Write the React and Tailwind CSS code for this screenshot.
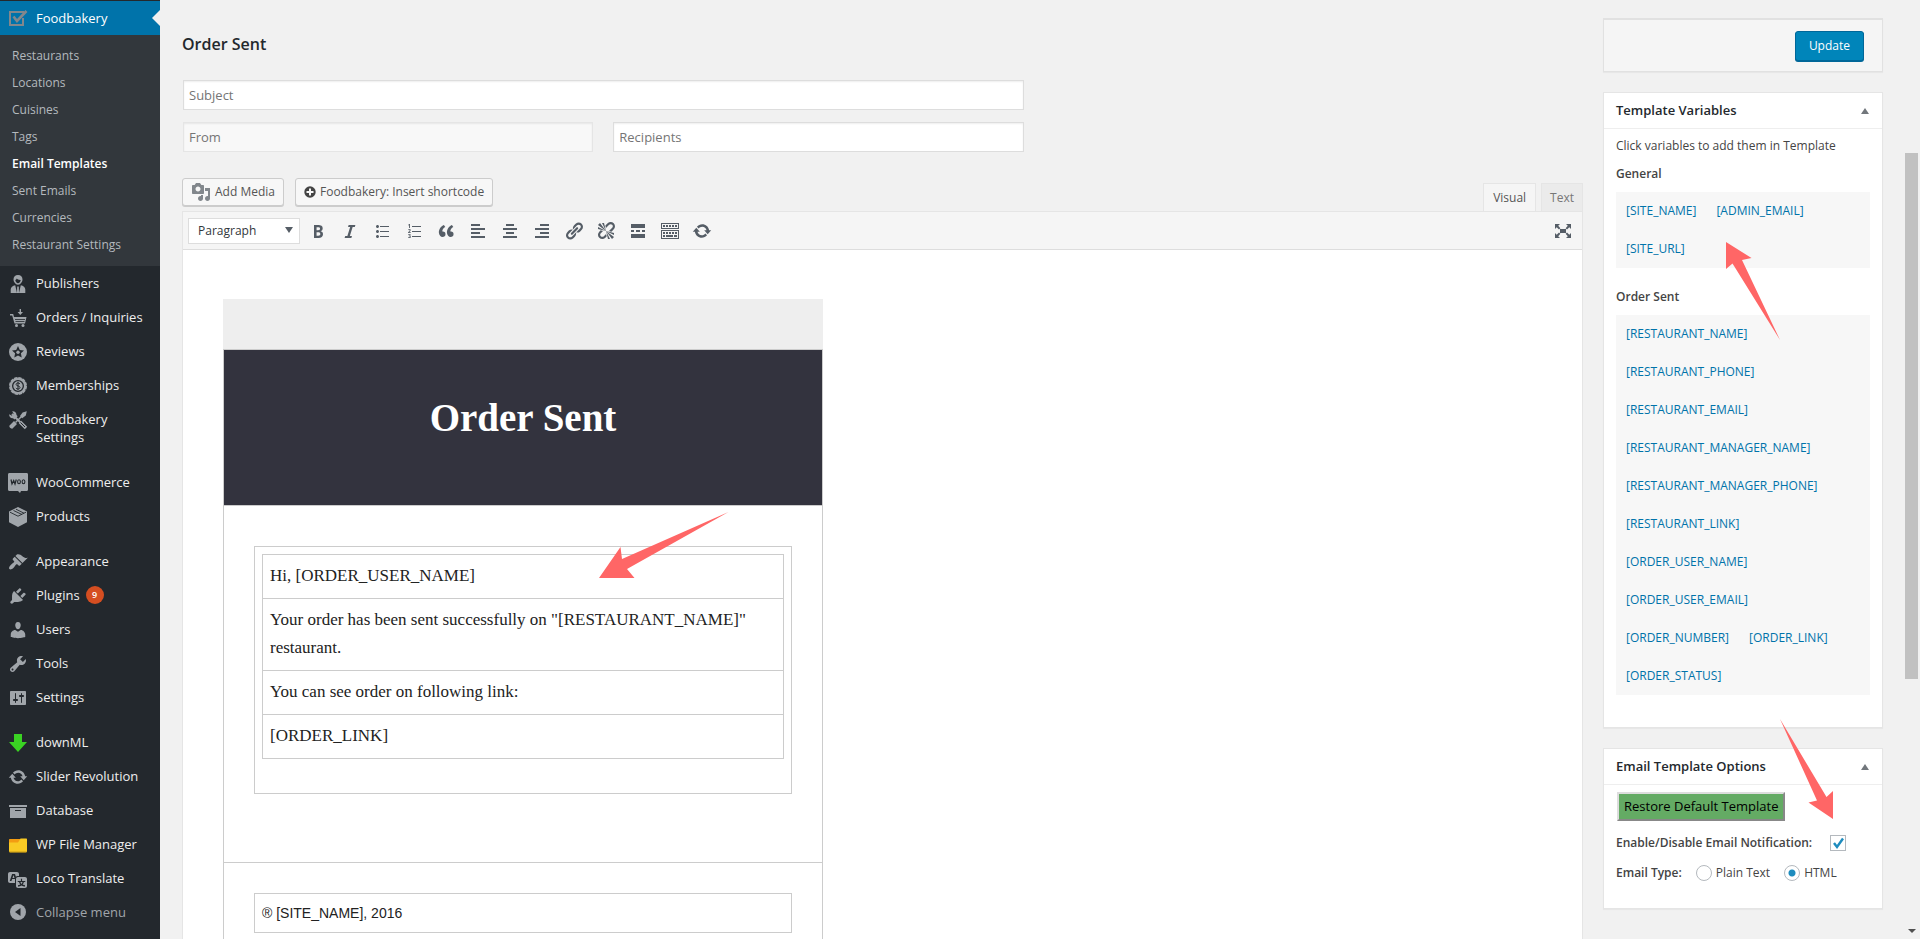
import React from "react";

const PATHS = {
  appearance:
    "M14.48 11.06L7.41 3.99l1.5-1.5c.5-.56 2.3-.47 3.51.32 1.21.8 1.43 1.28 2.91 2.1 1.18.64 2.45 1.26 4.45.85zm-.71.71L6.7 4.7 4.93 6.47c-.39.39-.39 1.02 0 1.41l1.06 1.06c.39.39.39 1.03 0 1.42-.6.6-1.43 1.11-2.21 1.69-.35.26-.7.53-1.01.84C1.43 14.23.4 16.08 1.4 17.07c.99 1 2.84-.03 4.18-1.36.31-.31.58-.66.85-1.02.57-.78 1.08-1.61 1.69-2.21.39-.39 1.02-.39 1.41 0l1.06 1.06c.39.39 1.02.39 1.41 0z",
  plugins:
    "M13.11 4.36L9.87 7.6 8 5.73l3.24-3.24c.35-.34 1.05-.2 1.56.32.52.51.66 1.21.31 1.55zm-8 1.77l.91-1.12 9.01 9.01-1.19.84c-.71.71-2.63 1.16-3.82 1.16H6.14L4.9 17.26c-.59.59-1.54.59-2.12 0-.59-.58-.59-1.53 0-2.12l1.24-1.24v-3.88c0-1.13.4-3.19 1.09-3.89zm7.26 3.97l3.24-3.24c.34-.35 1.04-.21 1.55.31.52.51.66 1.21.31 1.55l-3.24 3.25z",
  users:
    "M10 9.25c-2.27 0-2.73-3.44-2.73-3.44C7 4.02 7.82 2 9.97 2c2.16 0 2.98 2.02 2.71 3.81 0 0-.41 3.44-2.68 3.44zm0 2.57L12.72 10c2.39 0 4.52 2.33 4.52 4.53v2.49s-3.65 1.13-7.24 1.13c-3.65 0-7.24-1.13-7.24-1.13v-2.49c0-2.25 1.94-4.48 4.47-4.48z",
  tools:
    "M16.68 9.77c-1.34 1.34-3.3 1.67-4.95.99l-5.41 6.52c-.99.99-2.59.99-3.58 0s-.99-2.59 0-3.57l6.52-5.42c-.68-1.65-.35-3.61.99-4.95 1.28-1.28 3.12-1.62 4.72-1.06l-2.89 2.89 2.82 2.82 2.86-2.87c.53 1.58.18 3.39-1.08 4.65zM3.81 16.21c.4.39 1.04.39 1.43 0 .4-.4.4-1.04 0-1.43-.39-.4-1.03-.4-1.43 0-.39.39-.39 1.03 0 1.43z",
  settings:
    "M18 16V4c0-.55-.45-1-1-1H3c-.55 0-1 .45-1 1v12c0 .55.45 1 1 1h14c.55 0 1-.45 1-1zM8 11h1c.55 0 1 .45 1 1s-.45 1-1 1H8v1.5c0 .28-.22.5-.5.5s-.5-.22-.5-.5V13H6c-.55 0-1-.45-1-1s.45-1 1-1h1V5.5c0-.28.22-.5.5-.5s.5.22.5.5V11zm5-2h-1c-.55 0-1-.45-1-1s.45-1 1-1h1V5.5c0-.28.22-.5.5-.5s.5.22.5.5V7h1c.55 0 1 .45 1 1s-.45 1-1 1h-1v5.5c0 .28-.22.5-.5.5s-.5-.22-.5-.5V9z",
  archive: "M19 4v2H1V4h18zM2 7h16v10H2V7zm11 3V9H7v1h6z",
  update:
    "M10.2 3.28c3.53 0 6.43 2.61 6.92 6h2.08l-3.5 4-3.5-4h2.32c-.45-1.97-2.21-3.45-4.32-3.45-1.45 0-2.73.71-3.54 1.78L4.95 5.66C6.23 4.2 8.11 3.28 10.2 3.28zm-.4 13.44c-3.52 0-6.43-2.61-6.92-6H.8l3.5-4c1.17 1.33 2.33 2.67 3.5 4H5.48c.45 1.97 2.21 3.45 4.32 3.45 1.45 0 2.73-.71 3.54-1.78l1.71 1.95c-1.28 1.46-3.15 2.38-5.25 2.38z",
  translation:
    "M11 7H9.49c-.63 0-1.25.3-1.59.7L7 5H4.13l-2.39 7h1.69l.74-2H7v4H2c-1.1 0-2-.9-2-2V5c0-1.1.9-2 2-2h7c1.1 0 2 .9 2 2v2zM6.51 9H4.49l1-2.93zM10 8h7c1.1 0 2 .9 2 2v7c0 1.1-.9 2-2 2h-7c-1.1 0-2-.9-2-2v-7c0-1.1.9-2 2-2zm7.25 5v-1.08h-3.17V9.75h-1.16v2.17H9.75V13h1.28c.11.85.56 1.85 1.28 2.62-.87.36-1.89.62-2.31.62-.01.02.22.97.2 1.46.84 0 2.21-.5 3.28-1.15 1.09.65 2.48 1.15 3.34 1.15-.02-.49.2-1.44.2-1.46-.43 0-1.49-.27-2.38-.63.7-.77 1.14-1.77 1.25-2.61h1.36zm-3.81 1.93c-.5-.46-.85-1.13-1.01-1.93h2.09c-.17.8-.51 1.47-1 1.93l-.04.03s-.03-.02-.04-.03z",
  bold: "M6 4v13h4.54c1.37 0 2.46-.33 3.26-1 .8-.66 1.2-1.58 1.2-2.77 0-.84-.17-1.51-.51-2.01s-.9-.85-1.67-1.03v-.09c.57-.1 1.02-.4 1.36-.9s.51-1.13.51-1.91c0-1.14-.39-1.98-1.17-2.5C12.75 4.26 11.5 4 9.78 4H6zm2.57 5.15V6.26h1.36c.73 0 1.27.11 1.61.32.34.22.51.58.51 1.07 0 .54-.16.92-.47 1.15s-.82.35-1.51.35h-1.5zm0 2.19h1.6c1.44 0 2.16.53 2.16 1.61 0 .6-.17 1.05-.51 1.34s-.86.43-1.57.43H8.57v-3.38z",
  italic: "M14.78 6h-2.13l-2.8 9h2.12l-.62 2H4.6l.62-2h2.14l2.8-9H8.03l.62-2h6.75z",
  ul: "M5.5 7C4.67 7 4 6.33 4 5.5 4 4.68 4.67 4 5.5 4 6.32 4 7 4.68 7 5.5 7 6.33 6.32 7 5.5 7zM8 5h9v1H8V5zm-2.5 7c-.83 0-1.5-.67-1.5-1.5C4 9.68 4.67 9 5.5 9c.82 0 1.5.68 1.5 1.5 0 .83-.68 1.5-1.5 1.5zM8 10h9v1H8v-1zm-2.5 7c-.83 0-1.5-.67-1.5-1.5 0-.82.67-1.5 1.5-1.5.82 0 1.5.68 1.5 1.5 0 .83-.68 1.5-1.5 1.5zM8 15h9v1H8v-1z",
  ol: "M6 7V3h-.7L4 4l.4.5.7-.4V7H6zM8 5h9v1H8V5zM4 8.6C4.4 8.2 4.8 8 5.4 8 6.2 8 6.7 8.5 6.7 9.1c0 .8-.6 1.3-1.3 2.1h1.4v.8H4v-.6l1.3-1.4c.3-.3.4-.6.4-.8 0-.3-.2-.4-.4-.4-.3 0-.5.1-.8.4L4 8.6zM8 10h9v1H8v-1zM4.1 13.300c.4-.2.8-.3 1.300-.3.8 0 1.300.4 1.300 1 0 .4-.3.8-.7.9.6.1.9.5.9 1 0 .7-.6 1.100-1.600 1.100-.5 0-.9-.1-1.200-.2v-.8c.3.2.7.3 1.100.3.5 0 .8-.2.8-.5s-.3-.5-.8-.5h-.4v-.7h.4c.5 0 .7-.2.7-.4 0-.3-.2-.4-.5-.4s-.6.1-.9.3L4.100 13.300zM8 15h9v1H8v-1z",
  quote:
    "M9.49 13.22c0-.74-.2-1.38-.61-1.9-.62-.78-1.83-.88-2.53-.72-.29-1.65 1.11-3.75 2.92-4.65L7.88 4c-2.73 1.3-5.42 4.28-4.96 8.05C3.21 14.43 4.59 16 6.54 16c.85 0 1.56-.25 2.12-.75s.83-1.18.83-2.03zm8.05 0c0-.74-.2-1.38-.61-1.9-.63-.78-1.83-.88-2.53-.72-.29-1.65 1.11-3.75 2.92-4.65L15.93 4c-2.73 1.3-5.41 4.28-4.95 8.05.29 2.38 1.66 3.95 3.61 3.95.85 0 1.56-.25 2.12-.75s.83-1.18.83-2.03z",
  left: "M12 5V3H3v2h9zm5 4V7H3v2h14zm-5 4v-2H3v2h9zm5 4v-2H3v2h14z",
  center: "M14 5V3H6v2h8zm3 4V7H3v2h14zm-3 4v-2H6v2h8zm3 4v-2H3v2h14z",
  right: "M17 5V3H8v2h9zm0 4V7H3v2h14zm0 4v-2H8v2h9zm0 4v-2H3v2h14z",
  link: "M17.74 2.76c1.68 1.69 1.68 4.41 0 6.1l-1.53 1.52c-1.12 1.12-2.7 1.47-4.14 1.09l2.62-2.61.76-.77.76-.76c.84-.84.84-2.2 0-3.04-.84-.85-2.2-.85-3.04 0l-.77.76-3.38 3.38c-.37-1.44-.02-3.02 1.1-4.14l1.52-1.53c1.69-1.68 4.42-1.68 6.1 0zM8.59 13.43l5.34-5.34c.42-.42.42-1.1 0-1.52-.44-.43-1.13-.39-1.53 0l-5.33 5.34c-.42.42-.42 1.1 0 1.52.44.43 1.13.39 1.52 0zm-.76 2.29l4.14-4.15c.38 1.44.03 3.02-1.09 4.14l-1.52 1.53c-1.69 1.68-4.41 1.68-6.1 0-1.68-1.68-1.68-4.42 0-6.1l1.53-1.52c1.12-1.12 2.7-1.47 4.14-1.1l-4.14 4.15c-.85.84-.85 2.2 0 3.05.84.84 2.2.84 3.04 0z",
  unlink:
    "M17.74 2.26c1.68 1.69 1.68 4.41 0 6.1l-1.53 1.52c-.32.33-.69.58-1.08.77L13 10l1.69-1.64.76-.77.76-.76c.84-.84.84-2.2 0-3.04-.84-.85-2.2-.85-3.04 0l-.77.76-.76.76L10 7l-.65-2.14c.19-.38.44-.75.77-1.07l1.52-1.53c1.69-1.68 4.42-1.68 6.1 0zM2 4l8 6-6-8zm4-2l4 8-2-8H6zM2 6l8 4-8-2V6zm7.36 7.69L10 13l.74 2.35-1.38 1.39c-1.69 1.68-4.41 1.68-6.1 0-1.68-1.68-1.68-4.42 0-6.1l1.39-1.38L7 10l-.69.64-1.52 1.53c-.85.84-.85 2.2 0 3.04.84.85 2.2.85 3.04 0zM18 16l-8-6 6 8zm-4 2l-4-8 2 8h2zm4-4l-8-4 8 2v2z",
  more: "M17 7V3H3v4h14zM6 11V9H3v2h3zm6 0V9H8v2h4zm5 0V9h-3v2h3zm0 6v-4H3v4h14z",
  media:
    "M13 11V4c0-.55-.45-1-1-1h-1.67L9 1H5L3.67 3H2c-.55 0-1 .45-1 1v7c0 .55.45 1 1 1h10c.55 0 1-.45 1-1zM7 4.5c1.38 0 2.5 1.12 2.5 2.5S8.38 9.5 7 9.5 4.5 8.38 4.5 7 5.62 4.5 7 4.5zM14 6h5v10.5c0 1.38-1.12 2.5-2.5 2.5S14 17.88 14 16.5s1.12-2.5 2.5-2.5c.17 0 .34.02.5.05V9h-3V6zm-4 8.05V13h2v3.5c0 1.38-1.12 2.5-2.5 2.5S7 17.88 7 16.5 8.12 14 9.5 14c.17 0 .34.02.5.05z",
  fullscreen:
    "M7 3H2v5l1.7-1.7L6 8.6 7.4 7.2 5.2 4.8zM13 3l1.8 1.8-2.2 2.4L14 8.6l2.3-2.3L18 8V3zM7 8h6v4H7zM2 12v5h5l-1.8-1.8 2.2-2.4L6 11.400l-2.300 2.300zM18 12l-1.700 1.700-2.300-2.300-1.400 1.400 2.200 2.400L13 17h5z",
};

function Glyph({ name, className }) {
  return (
    <svg viewBox="0 0 20 20" fill="currentColor" fillRule="evenodd" className={className} aria-hidden="true">
      <path d={PATHS[name]} />
    </svg>
  );
}

function KeyboardIcon({ className }) {
  return (
    <svg viewBox="0 0 20 20" className={className} aria-hidden="true">
      <rect x="1.5" y="2.5" width="17" height="5" fill="none" stroke="currentColor" />
      <rect x="1.5" y="9.5" width="17" height="8" fill="none" stroke="currentColor" />
      <path d="M3 5h14M3 12h14" stroke="currentColor" strokeWidth="2" strokeDasharray="2 1" />
      <path d="M3 15h2M6 15h7M14 15h3" stroke="currentColor" strokeWidth="2" />
    </svg>
  );
}

const CUSTOM = {
  check: (
    <g fill="none" stroke="#82878c">
      <path d="M16 4H2v13h13V10" strokeWidth="2" />
      <path d="M5.5 8.5l3.500 4.500L18.500 3" strokeWidth="2.600" />
    </g>
  ),
  publisher: (
    <g>
      <path
        d="M10 1c2.8 0 4.6 1.9 4.5 4.4 0 1.6-.7 2.6-1.3 3.3-.7 1-1.7 2-3.2 2s-2.5-1-3.2-2c-.6-.7-1.3-1.7-1.3-3.3C5.4 2.9 7.2 1 10 1zm-2.7 4.900c.2 1.8 1.4 3.4 2.7 3.400s2.500-1.600 2.700-3.400c-2.200.1-3.300-.6-3.900-1.400-.3.7-.8 1.200-1.500 1.400z"
        fillRule="evenodd"
      />
      <path d="M2.700 19v-3.600c0-2.200 2-3.700 4.500-4.200L9 19zM17.300 19v-3.600c0-2.200-2-3.700-4.500-4.200L11 19zM9.200 12.600h1.600L11 19H9z" />
    </g>
  ),
  cart: (
    <g>
      <path d="M2 6h3.200l.8 3h12.500L17 15.500H6.500L4.200 7.500H2z" />
      <path d="M7 11.500h10M7.500 13.500h9" stroke="#23282d" strokeWidth=".8" />
      <path d="M11.600 1h1.400v3h2l-2.700 3L9.600 4h2z" />
      <circle cx="8.500" cy="17.500" r="1.500" />
      <circle cx="15" cy="17.500" r="1.500" />
    </g>
  ),
  star: (
    <g>
      <circle cx="10" cy="10" r="9" />
      <path d="M10 4l1.800 3.900 4.200.5-3.100 2.900.8 4.200L10 13.400l-3.700 2.100.8-4.200L4 8.400l4.200-.5z" fill="#23282d" />
      <circle cx="10" cy="10.300" r="1.700" />
    </g>
  ),
  coin: (
    <g>
      <circle cx="10" cy="10" r="8" fill="none" stroke="currentColor" strokeWidth="2" strokeDasharray="3.500 .69" />
      <circle cx="10" cy="10" r="7" fill="none" stroke="currentColor" strokeWidth="2" />
      <circle cx="10" cy="10" r="4.700" />
      <path d="M12 8c-.5-.8-1.200-1-2-1-1.100 0-1.900.5-1.900 1.400 0 2 3.900 1.100 3.900 3.100 0 1-.9 1.500-2 1.500-.9 0-1.700-.3-2.100-1.100M10 6v8" fill="none" stroke="#23282d" />
    </g>
  ),
  crossed: (
    <g>
      <path d="M4 4l9 9" stroke="currentColor" strokeWidth="2" />
      <path d="M17 3L7.500 12.500" stroke="currentColor" strokeWidth="1.500" />
      <path d="M1.200 4.200l2.800 1.500L5.700 4 4.200 1.200C6.500.9 8.600 2.300 8.500 5l1.200 1.300-3.200 3.200L5 8.300C2.600 8.600.9 6.500 1.200 4.200zM18.800 1.200l-1 4.300-3.600 2.700-2.200-2.200 2.600-3.600zM1.500 15.500l4.500-4.500 3 3-4.500 4.500c-1 1-4-2-3-3z" />
      <path d="M12 12l6 6" stroke="currentColor" strokeWidth="3.400" />
      <path d="M12.500 12.500l4.500 4.500" stroke="#23282d" strokeWidth="1" />
    </g>
  ),
  woo: (
    <g>
      <path d="M1.500 0h17C19.500 0 20 .7 20 1.500v15c0 .8-.5 1.500-1.500 1.500H13l-1 2-2-2H1.500C.5 18 0 17.300 0 16.500v-15C0 .7.5 0 1.500 0z" />
      <path d="M3 6.500l1 4.500 1.700-3.500L7 11l1.300-4.500" fill="none" stroke="#23282d" strokeWidth="1.200" />
      <ellipse cx="11" cy="8.800" rx="1.400" ry="2" fill="none" stroke="#23282d" strokeWidth="1.100" />
      <ellipse cx="15.500" cy="8.800" rx="1.400" ry="2" fill="none" stroke="#23282d" strokeWidth="1.100" />
    </g>
  ),
  box: (
    <g>
      <path d="M10 0l9 4.500v10.700L10 20l-9-4.800V4.500z" />
      <path d="M2 5.200l8 4 8-4M5.500 3.500l8.500 4M8 2.200l8 4" fill="none" stroke="#23282d" strokeWidth=".9" />
    </g>
  ),
  down: <path d="M6 1h8v8h5l-9 10L1 9h5z" fill="#3ad323" />,
  folder: (
    <g>
      <path d="M1 5c0-.8.4-1 1-1h10v4H1z" fill="#f39c12" />
      <path d="M1 7.500h9L12.500 3.500H18c.7 0 1 .4 1 1V16c0 .8-.4 1.200-1 1.200H2c-.6 0-1-.4-1-1.200z" fill="#f9ca24" />
      <path d="M1.500 17h17" stroke="#c99a12" />
    </g>
  ),
  collapse: (
    <g>
      <circle cx="10" cy="10" r="8" />
      <path d="M12.500 6v8L7 10z" fill="#23282d" />
    </g>
  ),
};

function MenuIcon({ name }) {
  return CUSTOM[name] ? (
    <svg viewBox="0 0 20 20" fill="currentColor" className="size-5 shrink-0" aria-hidden="true">
      {CUSTOM[name]}
    </svg>
  ) : (
    <Glyph name={name} className="size-5 shrink-0" />
  );
}

const SUBMENU = [
  "Restaurants",
  "Locations",
  "Cuisines",
  "Tags",
  "Email Templates",
  "Sent Emails",
  "Currencies",
  "Restaurant Settings",
];

const MENU_GROUPS = [
  [
    ["publisher", "Publishers"],
    ["cart", "Orders / Inquiries"],
    ["star", "Reviews"],
    ["coin", "Memberships"],
    ["crossed", "Foodbakery Settings"],
  ],
  [
    ["woo", "WooCommerce"],
    ["box", "Products"],
  ],
  [
    ["appearance", "Appearance"],
    ["plugins", "Plugins", 9],
    ["users", "Users"],
    ["tools", "Tools"],
    ["settings", "Settings"],
  ],
  [
    ["down", "downML"],
    ["update", "Slider Revolution"],
    ["archive", "Database"],
    ["folder", "WP File Manager"],
    ["translation", "Loco Translate"],
  ],
];

function Sidebar() {
  return (
    <nav className="w-40 shrink-0 bg-[#23282d] pt-px text-[13px] leading-[18px] text-[#eee]" aria-label="Admin menu">
      <a href="#foodbakery" className="relative flex items-center gap-2 bg-[#0073aa] py-[7px] pl-2 text-white">
        <MenuIcon name="check" />
        Foodbakery
        <span className="absolute top-[9px] right-0 border-8 border-transparent border-r-[#f1f1f1]" />
      </a>
      <ul className="bg-[#32373c] pt-[7px] pb-2">
        {SUBMENU.map((label) => (
          <li key={label}>
            <a
              href="#submenu"
              className={
                label === "Email Templates"
                  ? "block px-3 text-xs leading-[27px] font-semibold text-white"
                  : "block px-3 text-xs leading-[27px] text-[#b4b9be]"
              }
            >
              {label}
            </a>
          </li>
        ))}
      </ul>
      <div className="flex flex-col gap-[11px]">
        {MENU_GROUPS.map((group) => (
          <ul key={group[0][1]}>
            {group.map(([icon, label, count]) => (
              <li key={label}>
                <a href="#menu" className="flex gap-2 py-2 pr-3 pl-2">
                  <span className="-mb-0.5 text-[#a0a5aa]">
                    <MenuIcon name={icon} />
                  </span>
                  <span>{label}</span>
                  {count && (
                    <span className="-ml-0.5 size-[18px] rounded-full bg-[#d54e21] text-center text-[9px] font-semibold text-white">
                      {count}
                    </span>
                  )}
                </a>
              </li>
            ))}
          </ul>
        ))}
      </div>
      <button type="button" className="flex items-center gap-2 py-[7px] pl-2 text-[#a0a5aa]">
        <MenuIcon name="collapse" />
        Collapse menu
      </button>
    </nav>
  );
}

const TOOLS = [
  ["bold", "Bold"],
  ["italic", "Italic"],
  ["ul", "Bulleted list"],
  ["ol", "Numbered list"],
  ["quote", "Blockquote"],
  ["left", "Align left"],
  ["center", "Align center"],
  ["right", "Align right"],
  ["link", "Insert link"],
  ["unlink", "Remove link"],
  ["more", "Read more"],
  ["keyboard", "Toolbar toggle"],
  ["update", "Refresh"],
];

function Editor() {
  return (
    <section className="mt-[26px] flex min-h-0 flex-1 flex-col">
      <div className="flex items-end justify-between">
        <div className="flex gap-[11px] pb-[5px] text-xs text-[#555]">
          <button
            type="button"
            className="flex h-7 items-center gap-1 rounded-[3px] border border-[#ccc] bg-[#f7f7f7] px-2 shadow-[0_1px_0_#ccc]"
          >
            <Glyph name="media" className="size-5 text-[#82878c]" />
            Add Media
          </button>
          <button
            type="button"
            className="flex h-7 items-center gap-1 rounded-[3px] border border-[#ccc] bg-[#f7f7f7] px-2 shadow-[0_1px_0_#ccc]"
          >
            <svg viewBox="0 0 12 12" className="size-3" aria-hidden="true">
              <circle cx="6" cy="6" r="5.700" fill="#444" />
              <path d="M6 2.500v7M2.500 6h7" stroke="#f7f7f7" strokeWidth="2" />
            </svg>
            Foodbakery: Insert shortcode
          </button>
        </div>
        <div className="flex gap-[5px] text-xs">
          <button
            type="button"
            className="-mb-px h-[29px] border border-b-0 border-[#e5e5e5] bg-[#f5f5f5] px-[9px] text-[#555]"
          >
            Visual
          </button>
          <button type="button" className="h-7 border border-b-0 border-[#e5e5e5] bg-[#ebebeb] px-2 text-[#777]">
            Text
          </button>
        </div>
      </div>
      <div className="flex min-h-0 flex-1 flex-col border-x border-t border-[#e5e5e5]">
        <div className="flex items-center border-b border-[#ddd] bg-[#f5f5f5] px-[5px] py-[5px]">
          <div className="relative mr-1.5">
            <select
              aria-label="Block format"
              className="h-[26px] w-28 appearance-none border border-[#ddd] bg-white pl-[9px] text-xs text-[#32373c]"
            >
              <option>Paragraph</option>
            </select>
            <span className="pointer-events-none absolute top-[10px] right-[7px] border-x-4 border-t-[6px] border-transparent border-t-[#555d66]" />
          </div>
          <div className="flex flex-1 gap-2 text-[#555d66]">
            {TOOLS.map(([icon, label]) => (
              <button key={label} type="button" aria-label={label} className="flex size-6 items-center justify-center">
                {icon === "keyboard" ? <KeyboardIcon className="size-5" /> : <Glyph name={icon} className="size-5" />}
              </button>
            ))}
          </div>
          <button type="button" aria-label="Fullscreen" className="mr-0.5 flex size-6 items-center justify-center text-[#555d66]">
            <Glyph name="fullscreen" className="size-5" />
          </button>
        </div>
        <div className="min-h-0 flex-1 overflow-hidden bg-white px-10 pt-[49px]">
          <EmailPreview />
        </div>
      </div>
    </section>
  );
}

function EmailPreview() {
  return (
    <article className="relative w-[600px] font-['Liberation_Serif',serif] text-[17px] leading-7 text-[#222]">
      <div className="h-[50px] bg-[#eee]" />
      <div className="border border-[#ccc]">
        <header className="flex h-[156px] items-start justify-center border-b border-[#ccc] bg-[#33333e] pt-12">
          <h2 className="text-[39px] leading-10 font-bold text-white">Order Sent</h2>
        </header>
        <div className="border-b border-[#ccc] px-[30px] pt-10 pb-[68px]">
          <div className="border border-[#ccc] px-[7px] pt-[7px] pb-[34px]">
            <table className="w-full border-collapse">
              <tbody>
                {[
                  "Hi, [ORDER_USER_NAME]",
                  'Your order has been sent successfully on "[RESTAURANT_NAME]" restaurant.',
                  "You can see order on following link:",
                  "[ORDER_LINK]",
                ].map((line) => (
                  <tr key={line}>
                    <td className="border border-[#ccc] px-[7px] pt-[7px] pb-2">{line}</td>
                  </tr>
                ))}
              </tbody>
            </table>
          </div>
        </div>
        <footer className="px-[30px] py-[30px]">
          <p className="border border-[#ccc] px-[7px] py-[5px] font-['Liberation_Sans',sans-serif] text-sm leading-7">
            ® [SITE_NAME], 2016
          </p>
        </footer>
      </div>
      <svg viewBox="0 0 130 66" className="absolute top-[213px] left-[376px] h-[66px] w-[130px]" aria-hidden="true">
        <path d="M0 66L21.500 35l1.500 12L129.500 0 28 57l7.500 9z" fill="#f66" />
      </svg>
    </article>
  );
}

function Panel({ title, children }) {
  return (
    <section className="relative border border-[#e5e5e5] bg-white shadow-[0_1px_1px_rgba(0,0,0,0.04)]">
      <header className="flex h-9 items-center justify-between border-b border-[#eee] pr-[13px] pl-3">
        <h2 className="text-[13px] font-semibold text-[#23282d]">{title}</h2>
        <button type="button" aria-label={"Toggle " + title} className="border-x-4 border-b-[6px] border-transparent border-b-[#72777c]" />
      </header>
      {children}
    </section>
  );
}

function Variables({ title, names }) {
  return (
    <div>
      <h3 className="text-xs leading-5 font-semibold">{title}</h3>
      <ul className="mt-2 flex flex-wrap gap-x-5 bg-[#f7f7f7] px-2.5">
        {names.map((name) => (
          <li key={name} className="leading-[38px]">
            <a href="#variable" className="text-[#0073aa]">
              {name}
            </a>
          </li>
        ))}
      </ul>
    </div>
  );
}

function Aside() {
  return (
    <aside className="flex w-[280px] shrink-0 flex-col gap-5 pt-[18px] text-xs text-[#444]">
      <div className="flex justify-end border border-t-2 border-[#e1e1e1] bg-[#f5f5f5] px-[18px] pt-[11px] pb-2.5 shadow-[0_1px_1px_rgba(0,0,0,0.04)]">
        <button
          type="button"
          className="h-[30px] rounded-[3px] border border-[#006799] bg-[#0085ba] px-[13px] font-medium text-white shadow-[0_1px_0_#006799]"
        >
          Update
        </button>
      </div>
      <Panel title="Template Variables">
        <div className="flex flex-col px-3 pt-[7px] pb-8">
          <p className="mb-2 leading-5">Click variables to add them in Template</p>
          <div className="flex flex-col gap-[19px]">
            <Variables title="General" names={["[SITE_NAME]", "[ADMIN_EMAIL]", "[SITE_URL]"]} />
            <Variables
              title="Order Sent"
              names={[
                "[RESTAURANT_NAME]",
                "[RESTAURANT_PHONE]",
                "[RESTAURANT_EMAIL]",
                "[RESTAURANT_MANAGER_NAME]",
                "[RESTAURANT_MANAGER_PHONE]",
                "[RESTAURANT_LINK]",
                "[ORDER_USER_NAME]",
                "[ORDER_USER_EMAIL]",
                "[ORDER_NUMBER]",
                "[ORDER_LINK]",
                "[ORDER_STATUS]",
              ]}
            />
          </div>
        </div>
        <svg viewBox="0 0 54 98" className="absolute top-[149px] left-[122px] h-[98px] w-[54px]" aria-hidden="true">
          <path d="M0 0l25.500 16-9.500 2L54 98 6.500 21.500 0 27z" fill="#f66" />
        </svg>
      </Panel>
      <Panel title="Email Template Options">
        <div className="flex flex-col px-3 pt-[7px] pb-[25px]">
          <button
            type="button"
            className="ml-px h-[29px] self-start border-2 border-t-[#ddd] border-r-[#888] border-b-[#888] border-l-[#ddd] bg-[#64ab64] px-[5px] text-[13px] text-black"
          >
            Restore Default Template
          </button>
          <div className="mt-3 flex items-center gap-[18px]">
            <label htmlFor="notify" className="leading-5 font-semibold">
              Enable/Disable Email Notification:
            </label>
            <span className="relative flex">
              <input id="notify" type="checkbox" defaultChecked className="size-4 appearance-none border border-[#b4b9be] bg-white" />
              <svg viewBox="0 0 16 16" className="pointer-events-none absolute inset-0 size-4" aria-hidden="true">
                <path d="M4 8l3 4 6-8.500" fill="none" stroke="#1e8cbe" strokeWidth="2.400" />
              </svg>
            </span>
          </div>
          <div className="mt-2.5 flex items-center gap-3.5">
            <span className="leading-5 font-semibold">Email Type:</span>
            <label className="flex items-center gap-1">
              <input type="radio" name="type" className="size-4 appearance-none rounded-full border border-[#b4b9be] bg-white" />
              Plain Text
            </label>
            <label className="flex items-center gap-1">
              <input
                type="radio"
                name="type"
                defaultChecked
                className="size-4 appearance-none rounded-full border border-[#b4b9be] bg-white bg-[radial-gradient(circle,#1e8cbe_3px,transparent_4px)]"
              />
              HTML
            </label>
          </div>
        </div>
        <svg viewBox="0 0 54 100" className="absolute -top-[30px] left-[176px] h-[100px] w-[54px]" aria-hidden="true">
          <path d="M0 0l46.500 78 6.500-6v28L28.500 83.500 37 81.500z" fill="#f66" />
        </svg>
      </Panel>
    </aside>
  );
}

const FIELD =
  "h-[30px] min-w-0 border border-[#ddd] px-[5px] text-[13px] shadow-[inset_0_1px_2px_rgba(0,0,0,0.07)] placeholder:text-[#757575]";

export default function App() {
  return (
    <div className="flex h-screen overflow-hidden bg-[#f1f1f1] font-['Open_Sans',sans-serif]">
      <Sidebar />
      <div className="flex min-w-0 flex-1 gap-5 pr-5 pl-[22px]">
        <main className="flex min-w-0 flex-1 flex-col pt-8">
          <h1 className="text-base leading-6 font-semibold text-[#23282d]">Order Sent</h1>
          <form className="mt-6 ml-px grid w-3/5 grid-cols-2 gap-x-5 gap-y-3">
            <input aria-label="Subject" placeholder="Subject" className={FIELD + " col-span-2 bg-white"} />
            <input aria-label="From" placeholder="From" disabled className={FIELD + " border-[#e5e5e5] bg-[#f8f8f8]"} />
            <input aria-label="Recipients" placeholder="Recipients" className={FIELD + " bg-white"} />
          </form>
          <Editor />
        </main>
        <Aside />
      </div>
      <div className="flex w-[17px] shrink-0 flex-col items-center bg-[#f1f1f1] pt-[153px]" aria-hidden="true">
        <div className="h-[526px] w-[13px] bg-[#c1c1c1]" />
        <div className="mt-auto mb-1.5 border-x-4 border-t-4 border-transparent border-t-[#505050]" />
      </div>
    </div>
  );
}
